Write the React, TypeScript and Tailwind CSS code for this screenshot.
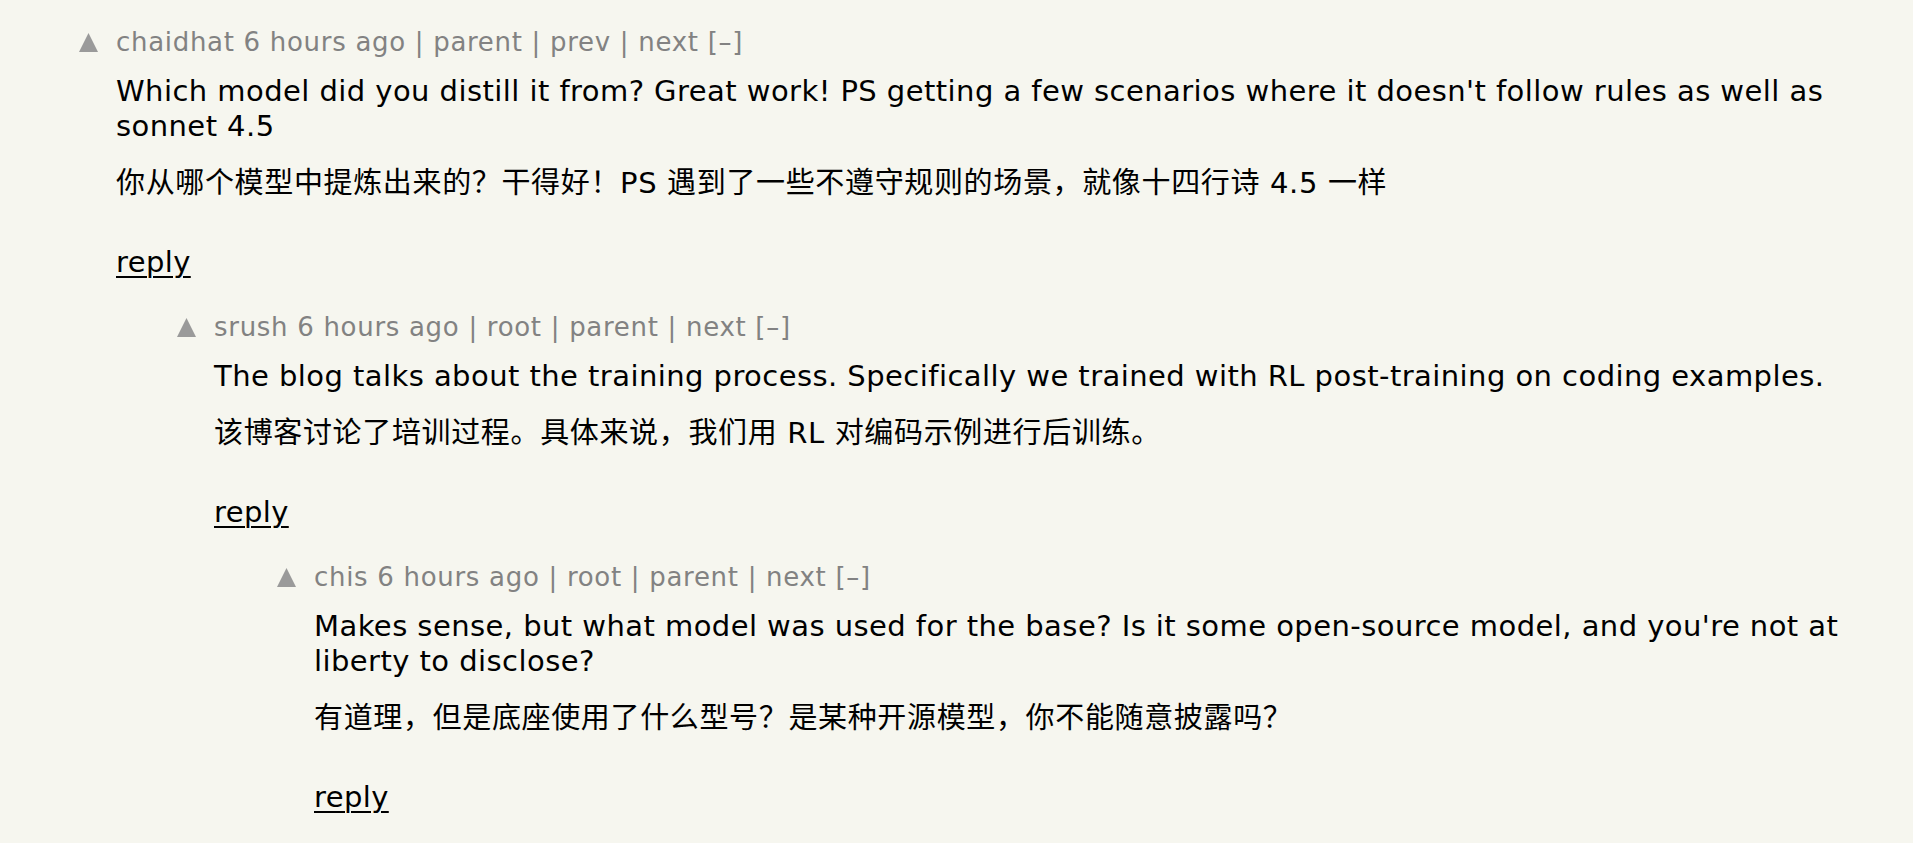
const FONT = "font-['DejaVu_Sans','Noto_Sans_CJK_SC',sans-serif]";

type Comment = {
  user: string;
  links: string[];
  indent: string;
  body: string;
  zh: string;
};

const COMMENTS: Comment[] = [
  {
    user: "chaidhat",
    links: ["parent", "prev", "next"],
    indent: "pl-0",
    body: "Which model did you distill it from? Great work! PS getting a few scenarios where it doesn't follow rules as well as sonnet 4.5",
    zh: "你从哪个模型中提炼出来的？干得好！PS 遇到了一些不遵守规则的场景，就像十四行诗 4.5 一样",
  },
  {
    user: "srush",
    links: ["root", "parent", "next"],
    indent: "pl-[98px]",
    body: "The blog talks about the training process. Specifically we trained with RL post-training on coding examples.",
    zh: "该博客讨论了培训过程。具体来说，我们用 RL 对编码示例进行后训练。",
  },
  {
    user: "chis",
    links: ["root", "parent", "next"],
    indent: "pl-[198px]",
    body: "Makes sense, but what model was used for the base? Is it some open-source model, and you're not at liberty to disclose?",
    zh: "有道理，但是底座使用了什么型号？是某种开源模型，你不能随意披露吗？",
  },
];

function VoteArrow() {
  return (
    <svg width="19" height="19" viewBox="0 0 19 19" className="mt-[6px] shrink-0">
      <polygon points="9.5,0 19,19 0,19" fill="#9a9a9a" />
    </svg>
  );
}

function CommentRow({ c, first }: { c: Comment; first: boolean }) {
  return (
    <div className={`flex ${c.indent} ${first ? "mt-[27px]" : "mt-[32px]"}`}>
      <VoteArrow />
      <div className="ml-[18px] flex-1 min-w-0">
        <div className="text-[26px] leading-[30px] tracking-[0.7px] text-[#828282]">
          {c.user} 6 hours ago
          {c.links.map((l) => (
            <span key={l}> | {l}</span>
          ))}{" "}
          [–]
        </div>
        <div className="mt-[17px] text-[29px] leading-[35px] tracking-[0.44px] text-black">{c.body}</div>
        <div className="mt-[22px] text-[29px] leading-[35px] tracking-[0.65px] text-black">{c.zh}</div>
        <div className="mt-[44px] text-[29px] leading-[35px] tracking-[0.4px]">
          <a className="text-black underline decoration-2 underline-offset-4">reply</a>
        </div>
      </div>
    </div>
  );
}

export default function App() {
  return (
    <div className={`min-h-screen bg-white ${FONT}`}>
      <div className="w-[1913px] min-h-[843px] bg-[#f6f6ef] pl-[79px] pr-[14px] overflow-hidden">
        {COMMENTS.map((c, i) => (
          <CommentRow key={c.user} c={c} first={i === 0} />
        ))}
      </div>
    </div>
  );
}
